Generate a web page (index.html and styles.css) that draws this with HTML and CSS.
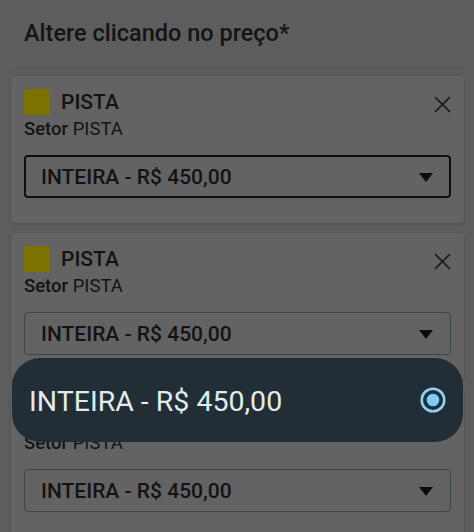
FILE: index.html
```html
<!DOCTYPE html>
<html lang="pt-BR">
<head>
    <meta charset="UTF-8">
    <meta name="viewport" content="width=device-width, initial-scale=1.0">
    <title>Altere clicando no preço</title>
    <link rel="stylesheet" href="styles.css">
</head>
<body>
    <div class="page">
        <h2 class="title">Altere clicando no preço*</h2>
        <div class="divider"></div>

        <div class="ticket-card">
            <div class="ticket-head">
                <span class="sector-color"></span>
                <span class="sector-name">PISTA</span>
                <svg class="close-icon" viewBox="0 0 16 16" width="17" height="17">
                    <path d="M1 1 L15 15 M15 1 L1 15" stroke="#1c1c1c" stroke-width="1.6" fill="none"/>
                </svg>
            </div>
            <div class="sector-line"><strong>Setor</strong> PISTA</div>
            <div class="price-select focused">
                <span>INTEIRA - R$ 450,00</span>
                <span class="arrow"></span>
            </div>
        </div>

        <div class="ticket-card">
            <div class="ticket-head">
                <span class="sector-color"></span>
                <span class="sector-name">PISTA</span>
                <svg class="close-icon" viewBox="0 0 16 16" width="17" height="17">
                    <path d="M1 1 L15 15 M15 1 L1 15" stroke="#1c1c1c" stroke-width="1.6" fill="none"/>
                </svg>
            </div>
            <div class="sector-line"><strong>Setor</strong> PISTA</div>
            <div class="price-select">
                <span>INTEIRA - R$ 450,00</span>
                <span class="arrow"></span>
            </div>
        </div>

        <div class="ticket-card">
            <div class="ticket-head">
                <span class="sector-color"></span>
                <span class="sector-name">PISTA</span>
                <svg class="close-icon" viewBox="0 0 16 16" width="17" height="17">
                    <path d="M1 1 L15 15 M15 1 L1 15" stroke="#1c1c1c" stroke-width="1.6" fill="none"/>
                </svg>
            </div>
            <div class="sector-line"><strong>Setor</strong> PISTA</div>
            <div class="price-select">
                <span>INTEIRA - R$ 450,00</span>
                <span class="arrow"></span>
            </div>
        </div>
    </div>

    <!-- options popup of the native select -->
    <div class="option-sheet">
        <span class="option-label">INTEIRA - R$ 450,00</span>
        <svg class="radio" viewBox="0 0 26 26" width="26" height="26">
            <circle cx="13" cy="13" r="11.3" stroke="#8ad2f6" stroke-width="2.6" fill="none"/>
            <circle cx="13" cy="13" r="6.3" fill="#80ccf8"/>
        </svg>
    </div>
</body>
</html>
```

FILE: styles.css
```css
* {
    box-sizing: border-box;
    margin: 0;
    padding: 0;
    font-family: Roboto, 'Noto Sans', sans-serif;
}

body {
    background: #5d5d5d;
    color: #131313;
    min-height: 100vh;
    overflow: hidden;
}

.page {
    padding: 0 10px 0 11px;
}

.title {
    font-size: 23.5px;
    font-weight: 500;
    line-height: 27px;
    padding: 20px 13px 0;
    color: #141414;
}

.divider {
    height: 1px;
    background: #616161;
    margin: 17px 0 11px;
}

.ticket-card {
    background: #636363;
    border-radius: 4px;
    padding: 13px 13px 25px;
    margin-bottom: 10px;
    box-shadow: 0 1px 3px rgba(0,0,0,0.18);
}

.ticket-head {
    display: flex;
    align-items: center;
    height: 26px;
}

.sector-color {
    width: 26px;
    height: 26px;
    border-radius: 2px;
    background: #7b7200;
    margin-right: 11px;
}

.sector-name {
    font-size: 21px;
    font-weight: 500;
    flex: 1;
}

.close-icon {
    margin-top: 4px;
}

.sector-line {
    font-size: 18.5px;
    line-height: 21px;
    margin-top: 4px;
}

.sector-line strong {
    font-weight: 500;
}

.price-select {
    margin-top: 15px;
    height: 43px;
    border: 1px solid #3d4643;
    border-radius: 4px;
    display: flex;
    align-items: center;
    justify-content: space-between;
    padding: 0 17px 0 16px;
    font-size: 21px;
    font-weight: 500;
}

.price-select.focused {
    border: 2px solid #0f0f0f;
    padding: 0 16px 0 15px;
}

.arrow {
    width: 0;
    height: 0;
    border-left: 7px solid transparent;
    border-right: 7px solid transparent;
    border-top: 9px solid #0c0c0c;
    margin-top: 2px;
}

.option-sheet {
    position: fixed;
    left: 12px;
    top: 358px;
    width: 451px;
    height: 84px;
    background: #212e35;
    border-radius: 28px;
    display: flex;
    align-items: center;
    justify-content: space-between;
    padding: 0 17px 0 17px;
}

.option-label {
    color: #e4eaee;
    font-size: 28.5px;
    font-weight: 400;
    margin-top: 2px;
}
```
